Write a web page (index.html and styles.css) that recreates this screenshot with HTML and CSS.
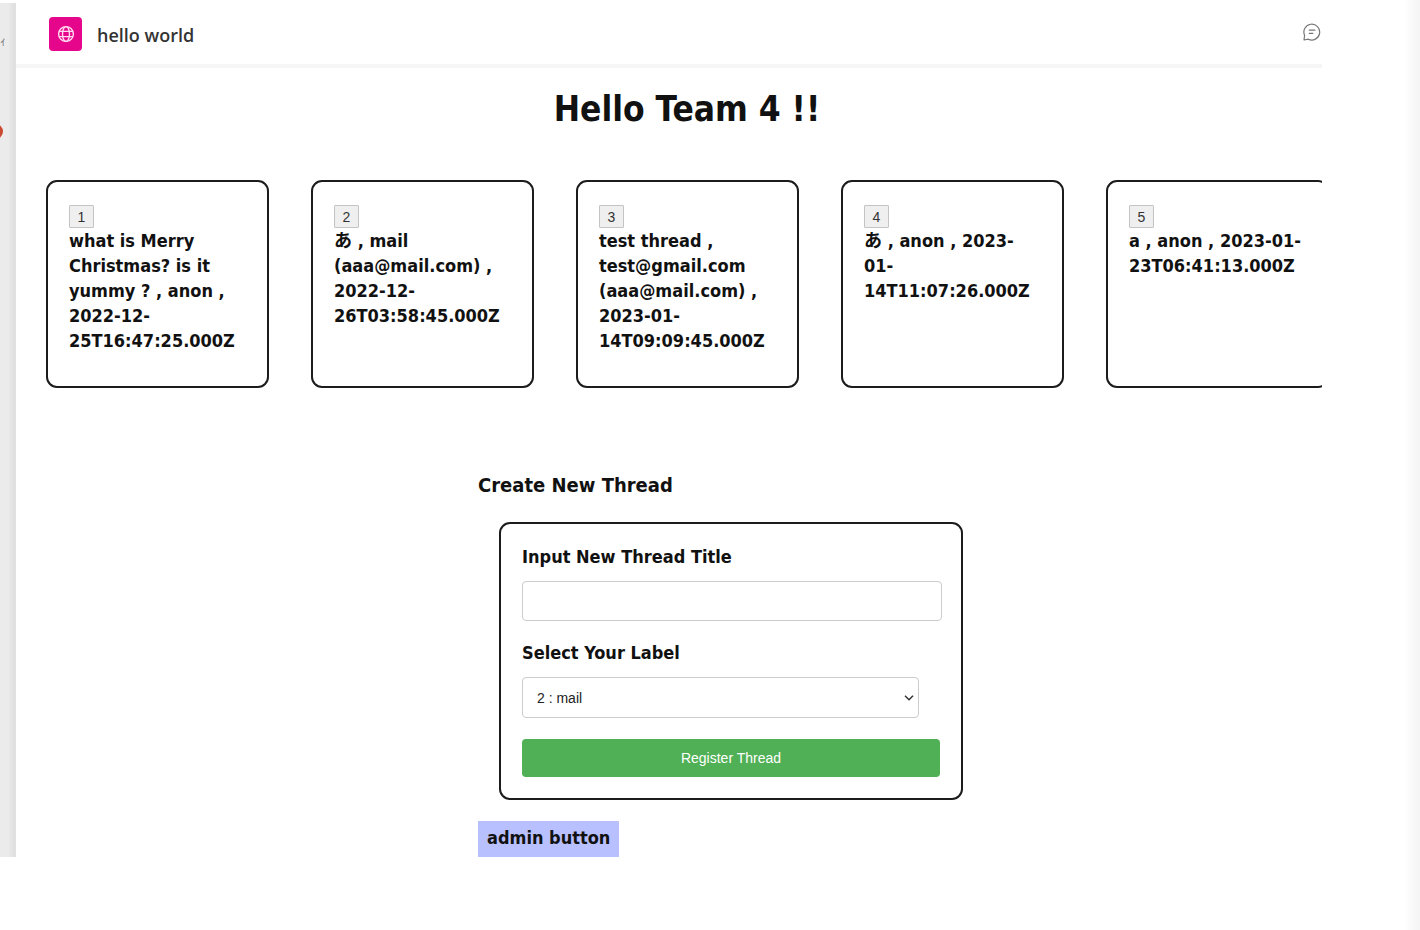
FILE: index.html
```html
<!DOCTYPE html>
<html lang="ja">
<head>
<meta charset="utf-8">
<title>hello world</title>
<link rel="stylesheet" href="styles.css">
</head>
<body>
<div class="window">
  <aside class="rail">
    <span class="rail-label">ｨ</span>
    <span class="rail-badge"></span>
  </aside>
  <div class="app">
    <header class="topbar">
      <span class="logo">
        <svg width="18" height="18" viewBox="0 0 18 18" fill="none" stroke="#ffd9f0" stroke-width="1.4">
          <circle cx="9" cy="9" r="7.4"/>
          <ellipse cx="9" cy="9" rx="3.5" ry="7.4"/>
          <path d="M2 6.4h14M2 11.6h14"/>
        </svg>
      </span>
      <span class="app-name">hello world</span>
      <button class="chat" type="button" aria-label="Chat">
        <svg width="18" height="18" viewBox="0 0 18 18" fill="none" stroke="#777" stroke-width="1.2" stroke-linecap="round" stroke-linejoin="round">
          <path d="M1 17 1.6 12.4A7.9 7.9 0 1 1 5.3 16.2Z"/>
          <path d="M6.3 7.2h5.6M6.3 10.4h3.5"/>
        </svg>
      </button>
    </header>
    <main class="content">
      <h1 class="title">Hello Team 4 !!</h1>
      <div class="threads">
        <article class="card thread"><button class="num" type="button">1</button><p class="text">what is Merry Christmas? is it yummy ? , anon , 2022-12-25T16:47:25.000Z</p></article>
        <article class="card thread"><button class="num" type="button">2</button><p class="text">あ , mail (aaa@mail.com) , 2022-12-26T03:58:45.000Z</p></article>
        <article class="card thread"><button class="num" type="button">3</button><p class="text">test thread , test@gmail.com (aaa@mail.com) , 2023-01-14T09:09:45.000Z</p></article>
        <article class="card thread"><button class="num" type="button">4</button><p class="text">あ , anon , 2023-01-14T11:07:26.000Z</p></article>
        <article class="card thread"><button class="num" type="button">5</button><p class="text">a , anon , 2023-01-23T06:41:13.000Z</p></article>
      </div>
      <section class="create">
        <h2 class="heading">Create New Thread</h2>
        <form class="card form">
          <label class="label" for="title">Input New Thread Title</label>
          <input class="field" id="title" type="text">
          <label class="label" for="label">Select Your Label</label>
          <div class="select-wrap">
            <select class="select" id="label"><option>2 : mail</option></select>
            <svg class="chevron" width="10" height="6" viewBox="0 0 10 6" fill="none" stroke="#333" stroke-width="1.5"><path d="M1 .8 5 4.8 9 .8"/></svg>
          </div>
          <button class="submit" type="button">Register Thread</button>
        </form>
        <button class="admin" type="button">admin button</button>
      </section>
    </main>
  </div>
  <div class="edge"></div>
</div>
</body>
</html>
```
FILE: styles.css
```css
* { box-sizing: border-box; }
body {
  margin: 0;
  background: #fff;
  color: #111;
  font-family: "DejaVu Sans Condensed", "Noto Sans CJK JP", sans-serif;
}
.window {
  display: grid;
  grid-template-columns: 16px minmax(0, 1fr) 98px;
  min-height: 100vh;
}
.rail {
  position: relative;
  overflow: hidden;
  align-self: start;
  height: 854px;
  margin-top: 3px;
  background: linear-gradient(to right, #ebebeb 8px, #dedede 15px, #e6e6e6);
}
.rail-label {
  position: absolute;
  left: 0;
  top: 30px;
  font: 12px/16px "Noto Sans CJK JP", sans-serif;
  color: #777;
}
.rail-badge {
  position: absolute;
  left: -12px;
  top: 121px;
  width: 15px;
  height: 15px;
  border-radius: 50%;
  background: #cc4a31;
}
.edge {
  width: 16px;
  justify-self: end;
  background: linear-gradient(to right, #fff, #f4f4f4);
}
.topbar {
  display: flex;
  align-items: center;
  gap: 15px;
  height: 68px;
  padding: 0 1px 0 33px;
  border-bottom: 4px solid #f6f6f6;
}
.logo {
  display: grid;
  place-items: center;
  width: 33px;
  height: 34px;
  margin-top: 4px;
  border-radius: 4px;
  background: #e6068c;
}
.app-name {
  margin-top: 6px;
  font: 600 18px/28px "Open Sans", sans-serif;
  color: #333;
}
.chat {
  display: flex;
  margin-left: auto;
  padding: 0;
  border: 0;
  background: none;
}
.title {
  margin: 20px 0 50px;
  padding-left: 36px;
  text-align: center;
  font-size: 35px;
  line-height: 42px;
}
.threads {
  display: flex;
  gap: 42px;
  padding-left: 30px;
  overflow: hidden;
}
.card {
  border: 2px solid #1c1c1c;
  border-radius: 11px;
  padding: 21px;
}
.thread {
  flex: 0 0 223px;
  height: 208px;
}
.num {
  display: block;
  width: 25px;
  height: 23px;
  margin-top: 2px;
  padding: 0;
  border: 1px solid #c4c4c4;
  border-radius: 1px;
  background: #efefef;
  color: #333;
  font: 14px/20px "Liberation Sans", sans-serif;
}
.text {
  margin: 0;
  font-size: 18px;
  font-weight: 700;
  line-height: 25px;
}
.create {
  margin: 83px 0 0 462px;
}
.heading {
  margin: 0 0 23px;
  font-size: 20px;
  line-height: 28px;
}
.form {
  max-width: 464px;
  margin-left: 21px;
}
.label {
  display: block;
  font-size: 18px;
  font-weight: 700;
  line-height: 24px;
}
.field {
  display: block;
  width: calc(100% + 2px);
  height: 40px;
  margin: 12px 0 20px;
  padding: 0 14px;
  border: 1px solid #ccc;
  border-radius: 4px;
  font: 14px "Liberation Sans", sans-serif;
}
.select-wrap {
  position: relative;
  width: 95%;
  margin: 12px 0 21px;
}
.select {
  display: block;
  width: 100%;
  height: 41px;
  padding: 0 14px;
  appearance: none;
  border: 1px solid #ccc;
  border-radius: 4px;
  background: #fff;
  color: #222;
  font: 14px "Liberation Sans", sans-serif;
}
.chevron {
  position: absolute;
  right: 5px;
  top: 18px;
  pointer-events: none;
}
.submit {
  display: block;
  width: 100%;
  height: 38px;
  border: 0;
  border-radius: 4px;
  background: #50b055;
  color: #fff;
  font: 14px "Liberation Sans", sans-serif;
}
.admin {
  margin-top: 21px;
  padding: 4px 9px 6px;
  border: 0;
  background: #b9c0ff;
  color: #111;
  font: 700 18px/26px "DejaVu Sans Condensed", sans-serif;
}
```
